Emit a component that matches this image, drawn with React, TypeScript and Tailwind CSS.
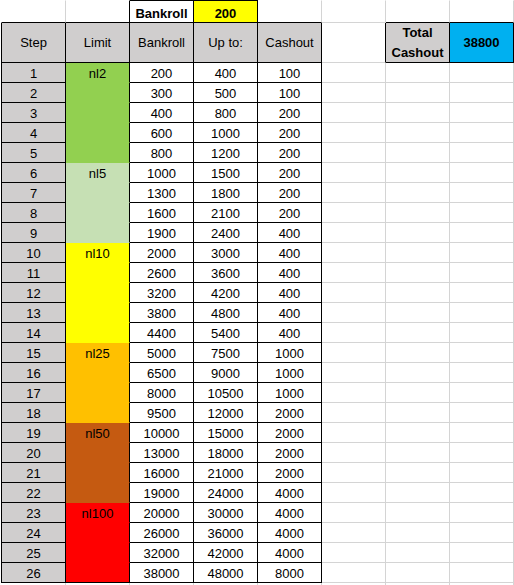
type Cell = { t?: string; bg?: string; bb?: string; bold?: boolean; two?: boolean };

const LIMITS: { name: string; rows: number; bg: string; bb: string }[] = [
  { name: "nl2", rows: 5, bg: "bg-[#92d050]", bb: "border-b-[#92d050]" },
  { name: "nl5", rows: 4, bg: "bg-[#c6e0b4]", bb: "border-b-[#c6e0b4]" },
  { name: "nl10", rows: 5, bg: "bg-[#ffff00]", bb: "border-b-[#ffff00]" },
  { name: "nl25", rows: 4, bg: "bg-[#ffc000]", bb: "border-b-[#ffc000]" },
  { name: "nl50", rows: 4, bg: "bg-[#c55a11]", bb: "border-b-[#c55a11]" },
  { name: "nl100", rows: 4, bg: "bg-[#ff0000]", bb: "border-b-[#ff0000]" },
];

const BANKROLL = [200, 300, 400, 600, 800, 1000, 1300, 1600, 1900, 2000, 2600, 3200, 3800, 4400, 5000, 6500, 8000, 9500, 10000, 13000, 16000, 19000, 20000, 26000, 32000, 38000];
const UPTO = [400, 500, 800, 1000, 1200, 1500, 1800, 2100, 2400, 3000, 3600, 4200, 4800, 5400, 7500, 9000, 10500, 12000, 15000, 18000, 21000, 24000, 30000, 36000, 42000, 48000];
const CASHOUT = [100, 100, 200, 200, 200, 200, 200, 200, 400, 400, 400, 400, 400, 400, 1000, 1000, 1000, 2000, 2000, 2000, 2000, 4000, 4000, 4000, 4000, 8000];

const GRAY = "bg-[#d0cece]";

function buildRows(): Cell[][] {
  const rows: Cell[][] = [];
  rows.push([{}, {}, { t: "Bankroll", bold: true }, { t: "200", bold: true, bg: "bg-[#ffff00]" }, {}, {}, {}, {}]);
  rows.push([
    { t: "Step", bg: GRAY },
    { t: "Limit", bg: GRAY },
    { t: "Bankroll", bg: GRAY },
    { t: "Up to:", bg: GRAY },
    { t: "Cashout", bg: GRAY },
    {},
    { t: "Total Cashout", bg: GRAY, bold: true, two: true },
    { t: "38800", bg: "bg-[#00b0f0]", bold: true },
  ]);
  let i = 0;
  for (const l of LIMITS) {
    for (let k = 0; k < l.rows; k++) {
      rows.push([
        { t: String(i + 1), bg: GRAY },
        { t: k === 0 ? l.name : "", bg: l.bg, bb: i < 25 ? l.bb : undefined },
        { t: String(BANKROLL[i]) },
        { t: String(UPTO[i]) },
        { t: String(CASHOUT[i]) },
        {},
        {},
        {},
      ]);
      i++;
    }
  }
  rows.push([{}, {}, {}, {}, {}, {}, {}, {}]);
  return rows;
}

function isBlack(r: number, c: number) {
  if (r === 0 && (c === 2 || c === 3)) return true;
  if (r >= 1 && r <= 27 && c >= 0 && c <= 4) return true;
  if (r === 1 && (c === 6 || c === 7)) return true;
  return false;
}

export default function App() {
  const rows = buildRows();
  return (
    <div className="h-[585px] w-[514px] overflow-hidden bg-white pl-px font-['Liberation_Sans',Arial,sans-serif] text-[13px] text-black">
      <div className="grid grid-cols-[65px_repeat(7,64px)] grid-rows-[23px_40px_repeat(26,20px)_3px]">
        {rows.map((row, r) =>
          row.map((cell, c) => {
            const right = isBlack(r, c) || isBlack(r, c + 1) ? "border-r-black" : "border-r-[#d4d4d4]";
            let bottom = "border-b-0";
            if (r < 28) {
              if (cell.bb) bottom = "border-b " + cell.bb;
              else bottom = "border-b " + (isBlack(r, c) || isBlack(r + 1, c) ? "border-b-black" : "border-b-[#d4d4d4]");
            }
            const left = c === 0 ? "border-l " + (isBlack(r, 0) ? "border-l-black" : "border-l-white") : "";
            const top = r === 0 ? "border-t " + (isBlack(0, c) ? "border-t-black" : "border-t-white") : "";
            const align = r === 1 ? "items-center" : "items-end pb-px";
            return (
              <div
                key={r + "-" + c}
                className={`flex justify-center border-r ${right} ${bottom} ${left} ${top} ${align} ${cell.bg ?? "bg-white"} ${cell.bold ? "font-bold" : ""} ${cell.two ? "leading-[20px]" : "leading-[15px]"} text-center`}
              >
                {cell.two ? (
                  <span>
                    Total
                    <br />
                    Cashout
                  </span>
                ) : (
                  cell.t
                )}
              </div>
            );
          })
        )}
      </div>
    </div>
  );
}
